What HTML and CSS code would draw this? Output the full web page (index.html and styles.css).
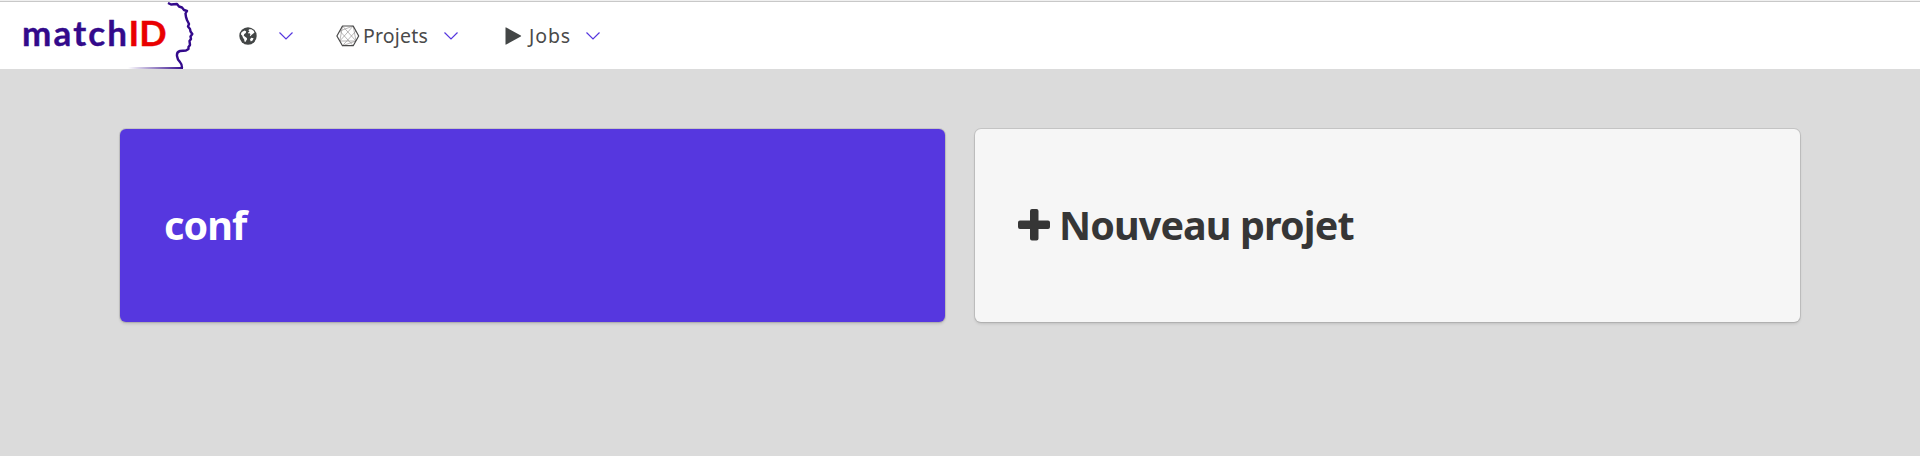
FILE: index.html
```html
<!DOCTYPE html>
<html lang="fr">
<head>
<meta charset="utf-8">
<title>matchID</title>
<link rel="stylesheet" href="styles.css">
</head>
<body>
<nav class="navbar">
  <a class="brand" aria-label="matchID">
    <svg class="logo" width="200" height="67" viewBox="0 2 200 67">
      <defs>
        <linearGradient id="fade" gradientUnits="userSpaceOnUse" x1="128" y1="0" x2="183" y2="0">
          <stop offset="0" stop-color="#330a8b" stop-opacity="0"/>
          <stop offset="1" stop-color="#330a8b"/>
        </linearGradient>
      </defs>
      <text class="logo-match" x="22" y="45.700" textLength="105">match</text>
      <text class="logo-id" x="128.500" y="45.700" textLength="38" lengthAdjust="spacingAndGlyphs">ID</text>
      <path class="profile" d="M168 3L171 4.500L177 4L179 6.500L182 7.500L184 10L187 11L185.500 13.500L186 17L187 20L189 24L188 26.500L190 29L190.500 31.500L192.300 34L190.500 36.500L191 39L189.500 41L190 45L188.500 47L188.500 49L186 50.500L180 51Q176.500 52 177 56Q177.500 60 180 62Q182 64 182 68"/>
      <rect x="128" y="67" width="55" height="2" fill="url(#fade)"/>
    </svg>
  </a>
  <a class="item item-globe">
    <svg width="18" height="18" viewBox="0 0 18 18">
      <circle cx="9" cy="9" r="8.700" fill="#434646"/>
      <path fill="#fff" d="M10 2.300L12.300 2.200L14.600 3.800L15.500 5.600L14 6.800L12.400 8L11.500 9.200L10.800 8.300L11.500 7.200L10.600 6.200L9.400 6.500L9 5.500L10.500 4.700L9.500 3.500ZM12.200 10.800L14.600 11.200L13.600 13.400L11.800 14.400L11 12.500Z"/>
      <path fill="#fff" d="M2.200 5.800L3.600 4.500L5.800 3.600L7.200 4.400L6.800 6L5.300 7L4.700 8.400L5.800 9.600L7.800 10.900L8.100 12.300L7.100 13.700L6.400 15L5.500 14.500L5.200 12.400L4 10.700L3.100 8.600L2 7.500Z"/>
    </svg>
    <svg class="chevron" width="16" height="10" viewBox="0 0 16 10"><path d="M1.500 1.500L8 8L14.500 1.500"/></svg>
  </a>
  <a class="item item-projects">
    <svg width="24" height="22" viewBox="0 0 24 22">
      <path class="mesh" d="M6.500 1L20 16M17.200 1L3.800 16M3.800 6L17.200 20.700M20 6L6.500 20.700M3.800 6L17.200 1M20 16L6.500 20.700M3.800 16H20M6.500 1L3.800 16M17.200 1L20 16"/>
      <path class="hexagon" d="M6.500 1H17.200L22.700 11L17.200 20.700H6.500L.9 11Z"/>
    </svg>
    <span class="label label-projects">Projets</span>
    <svg class="chevron" width="16" height="10" viewBox="0 0 16 10"><path d="M1.500 1.500L8 8L14.500 1.500"/></svg>
  </a>
  <a class="item item-jobs">
    <svg width="17" height="18" viewBox="0 0 17 18"><path fill="#434646" d="M.5.700Q.5 0 1.200.4L15.800 8.500Q16.500 9 15.800 9.500L1.200 17.600Q.5 18 .5 17.300Z"/></svg>
    <span class="label label-jobs">Jobs</span>
    <svg class="chevron" width="16" height="10" viewBox="0 0 16 10"><path d="M1.500 1.500L8 8L14.500 1.500"/></svg>
  </a>
</nav>
<main class="projects">
  <article class="card card-primary"><h1 class="title title-conf">conf</h1></article>
  <article class="card card-light">
    <svg class="plus" width="32" height="32" viewBox="0 0 32 32"><path fill="#363636" d="M14 0H18.500Q20.500 0 20.500 2V11.500H30Q32 11.500 32 13.500V18Q32 20 30 20H20.500V29.500Q20.500 31.500 18.500 31.500H14Q12 31.500 12 29.500V20H2Q0 20 0 18V13.500Q0 11.500 2 11.500H12V2Q12 0 14 0Z"/></svg>
    <h1 class="title title-new">Nouveau projet</h1>
  </article>
</main>
</body>
</html>
```

FILE: styles.css
```css
* { box-sizing: border-box; }
body {
  margin: 0;
  min-height: 456px;
  background: #dbdbdb;
  font-family: "Noto Sans", "Open Sans", sans-serif;
}
.navbar {
  display: flex;
  align-items: center;
  height: 69px;
  border-top: 1px solid #f0f0f0;
  background: #fff;
  box-shadow: inset 0 1px #c8c8c8;
  padding-top: 1px;
}
.brand, .logo { display: block; }
.brand { width: 200px; }
.logo-match, .logo-id { font: 700 34px Lato, sans-serif; stroke-width: .4; }
.logo-match { font-size: 35px; fill: #330a8b; stroke: #330a8b; }
.logo-id { fill: #e90000; stroke: #e90000; }
.profile { fill: none; stroke: #330a8b; stroke-width: 2.400; stroke-linejoin: round; }
.item { display: flex; align-items: center; height: 67px; }
.item-globe { margin-left: 39px; gap: 21px; }
.item-projects { margin-left: 42px; }
.item-jobs { margin-left: 46px; }
.mesh { fill: none; stroke: #8c8888; stroke-width: .6; }
.hexagon { fill: none; stroke: #4a4a4a; stroke-width: 1.2; stroke-linejoin: round; }
.chevron { fill: none; stroke: #5637df; stroke-width: 1.2; }
.label { color: #4a4a4a; font-size: 19.500px; line-height: 28px; white-space: nowrap; }
.label-projects { width: 66px; margin: 0 14px 0 3px; letter-spacing: .2px; }
.label-jobs { width: 43px; margin: 0 13px 0 7px; letter-spacing: .9px; }
.projects {
  display: grid;
  grid-template-columns: 825px 825px;
  gap: 30px;
  padding: 60px 120px 0;
}
.card {
  display: flex;
  align-items: center;
  height: 193px;
  padding: 0 44px;
  border-radius: 6px;
  box-shadow: 0 2px 3px rgba(10, 10, 10, .12), 0 0 0 1px rgba(10, 10, 10, .1);
}
.card-primary { background: #5637df; color: #fff; }
.card-light { background: #f6f6f6; color: #363636; }
.plus { margin: -2px 9px 0 -1px; }
.title { margin: -2px 0 0; font-size: 39.500px; line-height: 54px; font-weight: 700; white-space: nowrap; }
.title-conf { letter-spacing: -.9px; }
.title-new { letter-spacing: -.9px; }
```
